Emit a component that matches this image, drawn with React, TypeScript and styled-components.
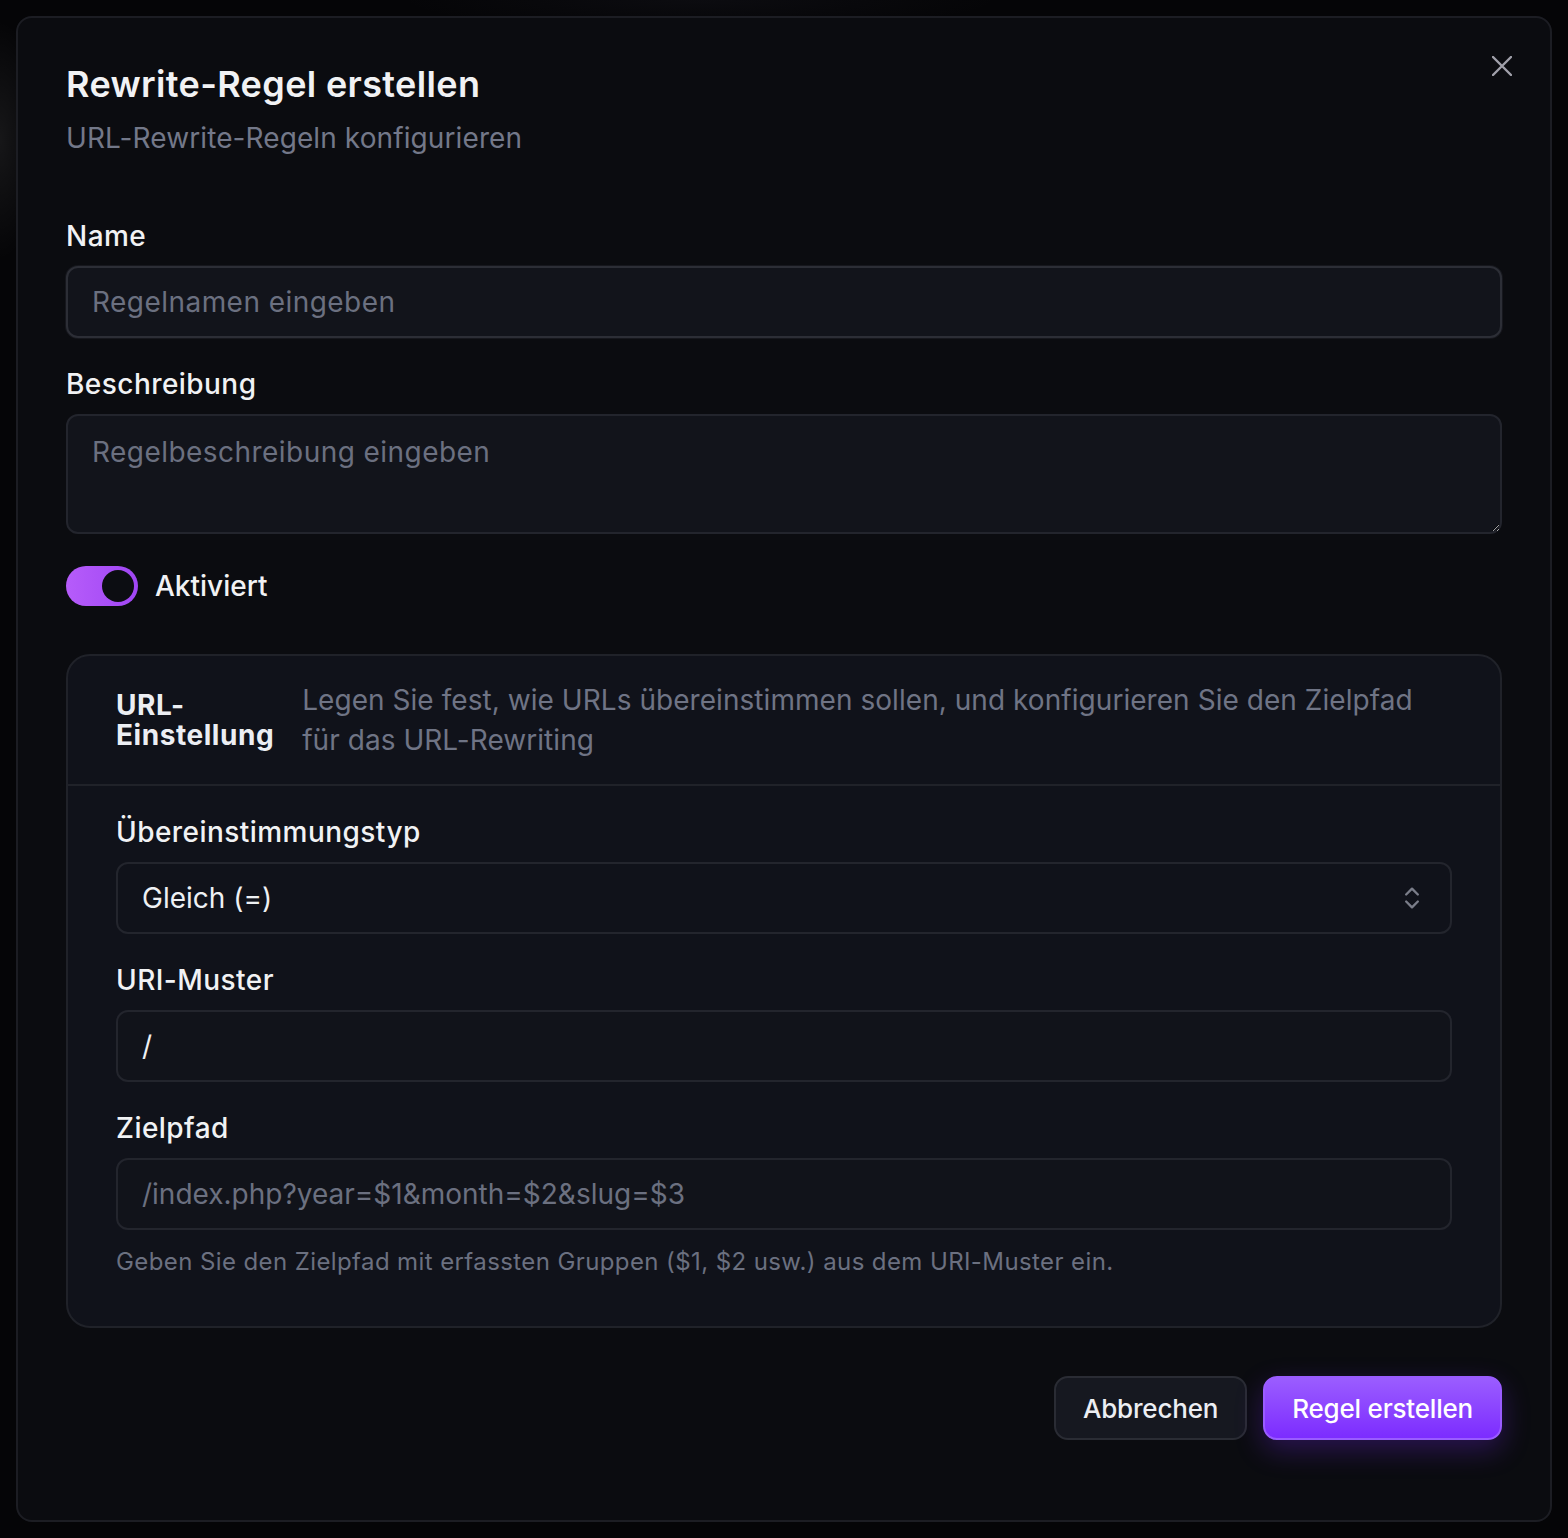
import React from "react";
import styled, { createGlobalStyle } from "styled-components";

const GlobalStyle = createGlobalStyle`
  * { box-sizing: border-box; }
  html, body { margin: 0; padding: 0; }
  body {
    background:
      radial-gradient(ellipse 40px 120px at 0px 140px, rgba(255,255,255,0.07), transparent 100%),
      radial-gradient(ellipse 300px 30px at 700px 0px, rgba(120,120,160,0.06), transparent 100%),
      #050507;
    font-family: Inter, "Noto Sans", "Liberation Sans", sans-serif;
    color: #f4f4f5;
    -webkit-font-smoothing: antialiased;
  }
`;

const Page = styled.div`
  width: 1568px;
  height: 1538px;
  padding: 16px;
`;

const Modal = styled.div`
  position: relative;
  width: 1536px;
  height: 1506px;
  background: #0b0c10;
  border: 2px solid #1c1d23;
  border-radius: 16px;
  padding: 48px 48px 0 48px;
  display: flex;
  flex-direction: column;
`;

const CloseButton = styled.button`
  position: absolute;
  top: 38px;
  right: 38px;
  width: 20px;
  height: 20px;
  padding: 0;
  border: none;
  background: transparent;
  color: #a1a1aa;
  display: flex;
  cursor: pointer;
`;

const Header = styled.div`
  display: flex;
  flex-direction: column;
  gap: 16px;
`;

const Title = styled.h2`
  margin: 0;
  font-size: 36px;
  line-height: 36px;
  font-weight: 600;
  color: #f1f2f4;
  letter-spacing: 0.35px;
`;

const Subtitle = styled.p`
  margin: 0;
  font-size: 28px;
  line-height: 40px;
  color: #737889;
  letter-spacing: 0.1px;
`;

const Form = styled.div`
  margin-top: 64px;
  display: flex;
  flex-direction: column;
`;

const Field = styled.div<{ $gapAfter?: number }>`
  display: flex;
  flex-direction: column;
  gap: 16px;
  margin-bottom: ${(p) => p.$gapAfter ?? 32}px;
`;

const Label = styled.label`
  font-size: 28px;
  line-height: 28px;
  font-weight: 500;
  color: #f1f2f4;
  letter-spacing: 0.45px;
`;

const TextInput = styled.input<{ $focused?: boolean; $spacing?: number }>`
  height: 72px;
  width: 100%;
  padding: 0 24px;
  font-family: inherit;
  font-size: 28px;
  letter-spacing: ${(p) => p.$spacing ?? 0}px;
  color: #eef0f3;
  background: ${(p) => (p.$focused ? "#12141b" : "#11131a")};
  border: 2px solid ${(p) => (p.$focused ? "#2c2e36" : "#23252d")};
  border-radius: 12px;
  outline: none;
  box-shadow: ${(p) => (p.$focused ? "0 0 0 1px #16171d" : "none")};
  &::placeholder { color: #6b7080; }
`;

const TextArea = styled.textarea`
  height: 120px;
  width: 100%;
  padding: 16px 24px;
  font-family: inherit;
  font-size: 28px;
  line-height: 40px;
  letter-spacing: 0.45px;
  color: #eef0f3;
  background: #12141b;
  border: 2px solid #23252d;
  border-radius: 12px;
  outline: none;
  &::placeholder { color: #6b7080; }
`;

const SwitchRow = styled.div`
  display: flex;
  align-items: center;
  gap: 17px;
  margin-bottom: 48px;
`;

const SwitchTrack = styled.div<{ $on: boolean }>`
  width: 72px;
  height: 40px;
  border-radius: 20px;
  padding: 4px;
  display: flex;
  justify-content: ${(p) => (p.$on ? "flex-end" : "flex-start")};
  background: ${(p) =>
    p.$on ? "linear-gradient(90deg, #b65cfa, #a046f4)" : "#27272a"};
`;

const SwitchThumb = styled.div`
  width: 32px;
  height: 32px;
  border-radius: 50%;
  background: #0c0d12;
`;

const SwitchLabel = styled.span`
  font-size: 28px;
  font-weight: 500;
  color: #f1f2f4;
`;

const Card = styled.div`
  background: #10121a;
  border: 2px solid #202229;
  border-radius: 24px;
  display: flex;
  flex-direction: column;
`;

const CardHeader = styled.div`
  display: flex;
  align-items: center;
  gap: 28px;
  padding: 24px 48px;
  border-bottom: 2px solid #202229;
`;

const CardTitle = styled.h3`
  margin: 0;
  width: min-content;
  flex-shrink: 0;
  font-size: 28px;
  line-height: 30px;
  font-weight: 700;
  letter-spacing: 0.55px;
  color: #eceef3;
`;

const CardDescription = styled.p`
  margin: 0;
  font-size: 28px;
  line-height: 40px;
  letter-spacing: 0.05px;
  color: #6f7485;
`;

const CardBody = styled.div`
  padding: 32px 48px 48px;
  display: flex;
  flex-direction: column;
`;

const SelectBox = styled.div`
  height: 72px;
  padding: 0 24px 0 24px;
  display: flex;
  align-items: center;
  justify-content: space-between;
  background: #10121a;
  border: 2px solid #23252d;
  border-radius: 12px;
  font-size: 28px;
  color: #eef0f3;
`;

const Hint = styled.p`
  margin: 0;
  font-size: 24px;
  line-height: 32px;
  color: #6b7080;
  letter-spacing: 0.4px;
`;

const Footer = styled.div`
  margin-top: 48px;
  display: flex;
  justify-content: flex-end;
  gap: 16px;
`;

const Button = styled.button<{ $primary?: boolean }>`
  height: 64px;
  padding: 0 27px;
  font-family: inherit;
  font-size: 26px;
  font-weight: 500;
  letter-spacing: -0.2px;
  border-radius: 14px;
  cursor: pointer;
  color: ${(p) => (p.$primary ? "#ffffff" : "#eceef3")};
  border: 2px solid ${(p) => (p.$primary ? "#9a5cff" : "#2a2c34")};
  background: ${(p) =>
    p.$primary ? "linear-gradient(180deg, #9b5dff 0%, #7c2cff 100%)" : "#161820"};
  box-shadow: ${(p) =>
    p.$primary ? "0 10px 28px rgba(124, 44, 255, 0.28)" : "none"};
`;

export default function App() {
  return (
    <>
      <GlobalStyle />
      <Page>
        <Modal>
          <CloseButton aria-label="Schließen">
            <svg width="20" height="20" viewBox="0 0 20 20" fill="none">
              <path d="M1 1L19 19M19 1L1 19" stroke="currentColor" strokeWidth="2.4" strokeLinecap="round" />
            </svg>
          </CloseButton>
          <Header>
            <Title>Rewrite-Regel erstellen</Title>
            <Subtitle>URL-Rewrite-Regeln konfigurieren</Subtitle>
          </Header>
          <Form>
            <Field>
              <Label>Name</Label>
              <TextInput $focused $spacing={0.45} placeholder="Regelnamen eingeben" />
            </Field>
            <Field>
              <Label>Beschreibung</Label>
              <TextArea placeholder="Regelbeschreibung eingeben" />
            </Field>
            <SwitchRow>
              <SwitchTrack $on>
                <SwitchThumb />
              </SwitchTrack>
              <SwitchLabel>Aktiviert</SwitchLabel>
            </SwitchRow>
            <Card>
              <CardHeader>
                <CardTitle>URL-Einstellung</CardTitle>
                <CardDescription>
                  Legen Sie fest, wie URLs übereinstimmen sollen, und konfigurieren Sie den Zielpfad für das URL-Rewriting
                </CardDescription>
              </CardHeader>
              <CardBody>
                <Field>
                  <Label>Übereinstimmungstyp</Label>
                  <SelectBox>
                    <span>Gleich (=)</span>
                    <svg width="28" height="28" viewBox="0 0 24 24" fill="none" stroke="#7a7d89" strokeWidth="2" strokeLinecap="round" strokeLinejoin="round">
                      <path d="m7 15 5 5 5-5" />
                      <path d="m7 9 5-5 5 5" />
                    </svg>
                  </SelectBox>
                </Field>
                <Field>
                  <Label>URI-Muster</Label>
                  <TextInput defaultValue="/" />
                </Field>
                <Field $gapAfter={0}>
                  <Label>Zielpfad</Label>
                  <TextInput placeholder="/index.php?year=$1&month=$2&slug=$3" />
                  <Hint>Geben Sie den Zielpfad mit erfassten Gruppen ($1, $2 usw.) aus dem URI-Muster ein.</Hint>
                </Field>
              </CardBody>
            </Card>
            <Footer>
              <Button>Abbrechen</Button>
              <Button $primary>Regel erstellen</Button>
            </Footer>
          </Form>
        </Modal>
      </Page>
    </>
  );
}
